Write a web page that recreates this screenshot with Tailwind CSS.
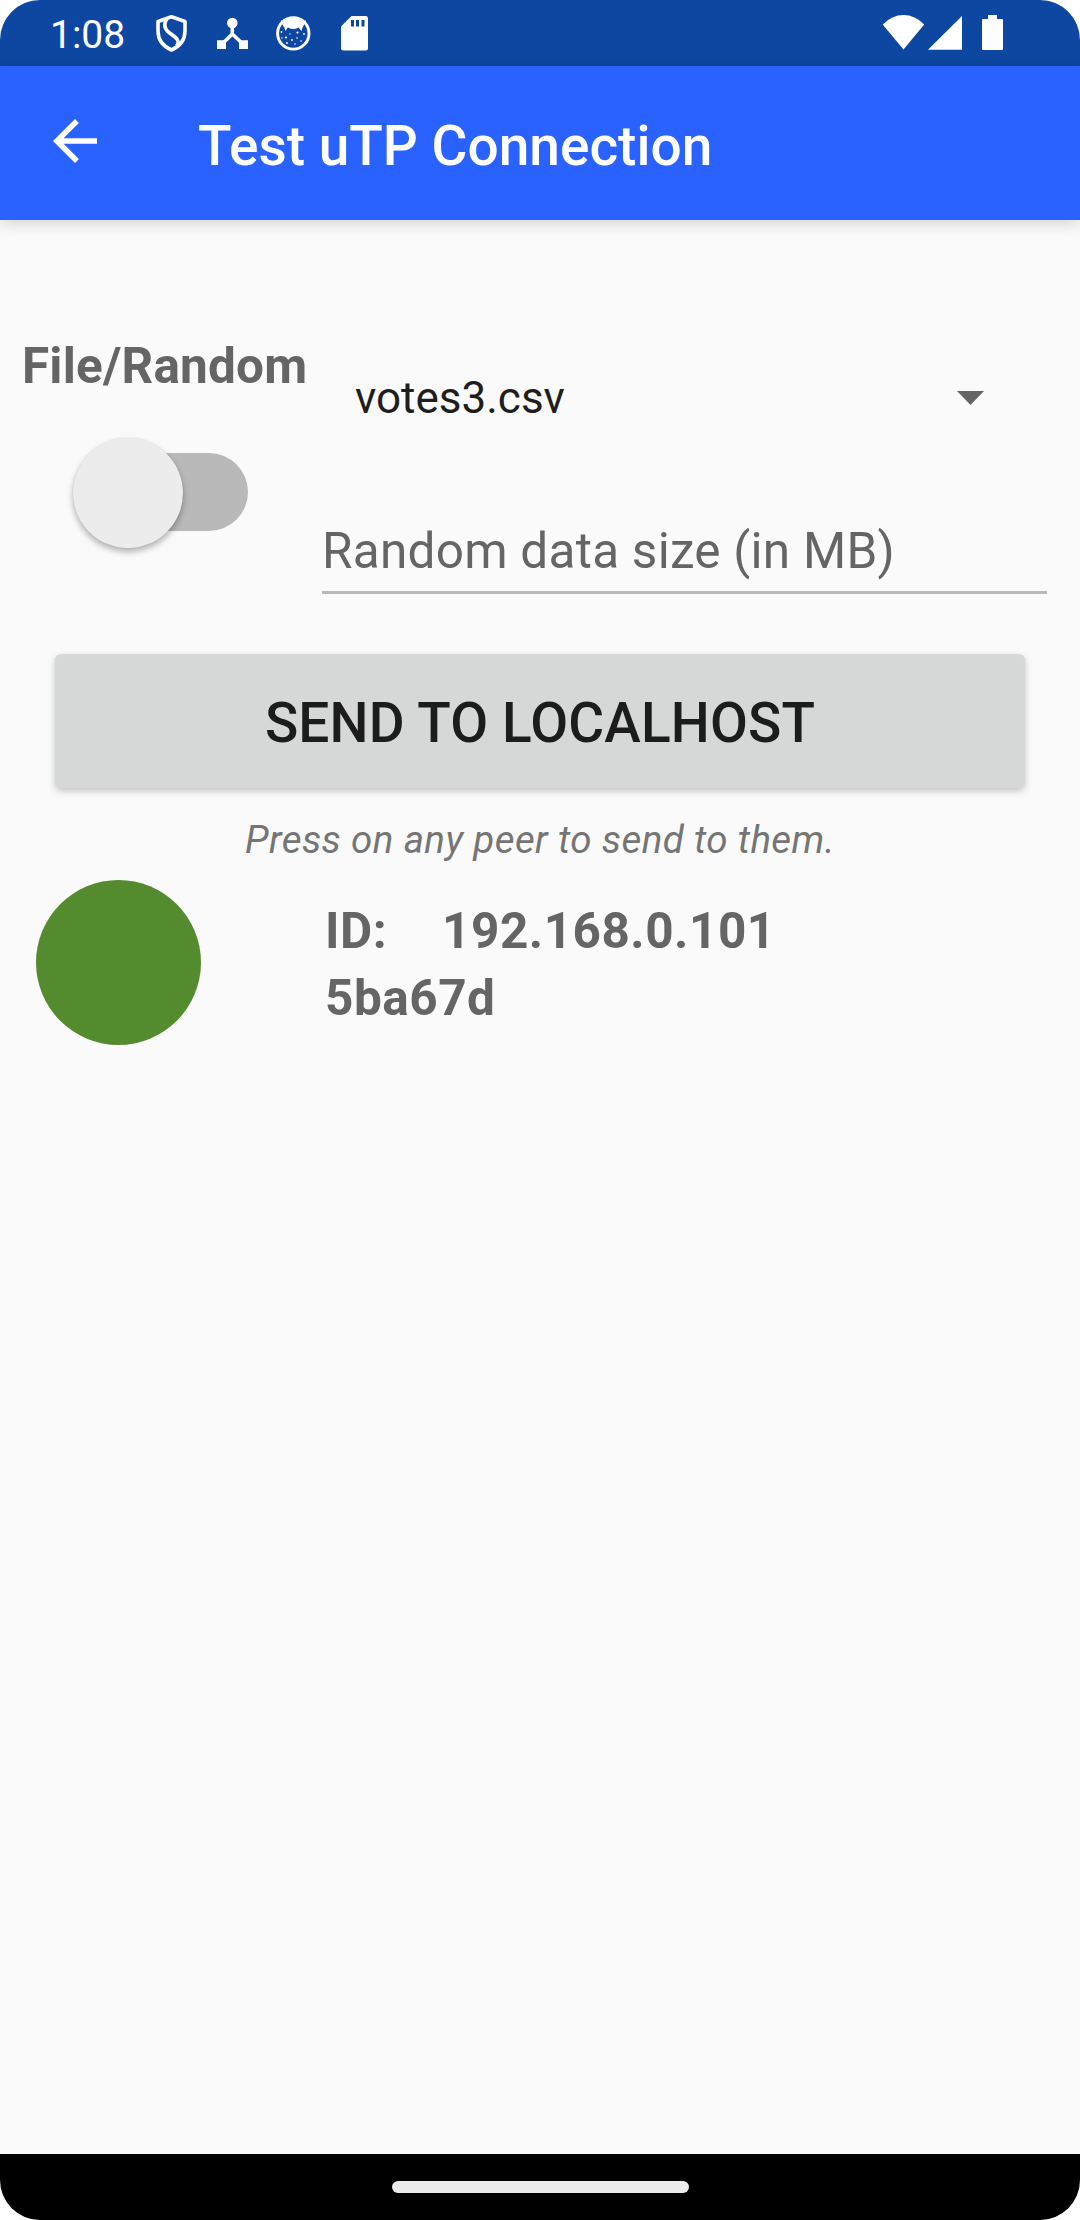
<!DOCTYPE html>
<html lang="en">
<head>
<meta charset="utf-8">
<title>Test uTP Connection</title>
<script src="https://cdn.jsdelivr.net/npm/@tailwindcss/browser@4"></script>
</head>
<body class="bg-white font-['Roboto',sans-serif]">
<div class="flex h-[2220px] w-[1080px] flex-col overflow-hidden rounded-[40px] bg-[#fafafa]">
  <!-- Status bar -->
  <div class="flex h-[66px] shrink-0 bg-[#0d47a1] text-white">
    <span class="w-[104px] shrink-0 pt-[4px] pl-[50px] text-[39px] leading-[63px] whitespace-nowrap">1:08</span>
    <svg class="h-[66px] w-[976px]" viewBox="104 0 976 66" fill="#fff">
      <path d="M171.500 16.800L185 21.500V31Q185 44 171.500 50Q158 44 158 31V21.500Z" fill="none" stroke="#fff" stroke-width="3.600" stroke-linejoin="round"/>
      <path d="M167 18.500C163.500 24 164.500 29 169 32.500L175 37Q180.500 41.500 176.500 46" fill="none" stroke="#fff" stroke-width="3.600"/>
      <circle cx="232.300" cy="23" r="5.300"/>
      <path d="M232.300 25V34L221 45M232.300 34L244 45" fill="none" stroke="#fff" stroke-width="3.600"/>
      <path d="M217 40.300h9V49H217zM239 40.300h9V49h-9z"/>
      <circle cx="293.300" cy="33.400" r="15.700" fill="none" stroke="#fff" stroke-width="2.900"/>
      <path d="M283 20Q293 14 304 20L302.500 27.500L301.500 31L298.500 27.500Q293.300 30.500 288 27.500L285.200 31L284.500 27.500Z"/>
      <path d="M281.500 20.500L284.500 27M305.500 20.500L302 27" fill="none" stroke="#fff" stroke-width="1.500"/>
      <g><circle cx="281.500" cy="32" r=".9"/><circle cx="286" cy="37.500" r="1.100"/><circle cx="290" cy="34" r=".7"/><circle cx="292" cy="40" r=".9"/><circle cx="297.500" cy="32.500" r="1.100"/><circle cx="297" cy="38" r=".8"/><circle cx="301" cy="41" r=".8"/><circle cx="304" cy="34" r=".9"/><circle cx="287" cy="43" r=".9"/><circle cx="295" cy="44" r=".8"/><circle cx="282" cy="38" r=".7"/></g>
      <path fill-rule="evenodd" d="M351.500 16H365.500Q368 16 368 18.500V48Q368 50.500 365.500 50.500H343.500Q341 50.500 341 48V26.500ZM351 20V26.500H354V20ZM356 20V26.500H359V20ZM361.500 20V26.500H364.500V20Z"/>
      <path d="M903.500 49.500L882.700 24.500Q892 15 903.500 15T924.200 24.500Z"/>
      <path d="M962 16V49.700H928Z"/>
      <path d="M988 15h9v4h5q1 0 1 1v29q0 1-1 1h-19q-1 0-1-1V20q0-1 1-1h5z"/>
    </svg>
  </div>
  <!-- App bar -->
  <header class="z-10 flex h-[154px] shrink-0 bg-[#2962ff] pl-[42px] text-white shadow-[0_3px_14px_rgba(0,0,0,0.16)]">
    <svg class="mt-[42px] size-[66px]" viewBox="0 0 24 24" fill="#fff"><path d="M20 11H7.830l5.590-5.590L12 4l-8 8 8 8 1.410-1.410L7.830 13H20v-2z"/></svg>
    <h1 class="pt-[6px] pl-[90px] text-[55px] leading-[148px] font-medium whitespace-nowrap">Test uTP Connection</h1>
  </header>
  <!-- Source selection -->
  <section class="flex h-[434px] shrink-0">
    <div class="w-[322px] shrink-0 pt-[116px]">
      <div class="pl-[22px] text-[49.5px] leading-[60px] font-bold tracking-[0.2px] whitespace-nowrap text-[#656565]">File/Random</div>
      <div class="mt-[57px] ml-[88px] flex h-[78px] w-[160px] items-center rounded-full bg-[#b9b9b9]">
        <div class="mt-[2px] -ml-[15px] size-[110px] shrink-0 rounded-full bg-[#ececec] shadow-[0_4px_6px_rgba(0,0,0,0.28),0_0_2px_rgba(0,0,0,0.1)]"></div>
      </div>
    </div>
    <div class="w-[725px] pt-[147px]">
      <div class="flex h-[63px] items-center justify-between pr-[63.500px] pl-[33px]">
        <span class="text-[44px] leading-[63px] text-[#1e1e1e]">votes3.csv</span>
        <svg class="-mt-[2px] h-[14px] w-[27px]" viewBox="0 0 27 14" fill="#656565"><path d="M0 0H27L13.500 14Z"/></svg>
      </div>
      <div class="mt-[91px] h-[73px] border-b-[3px] border-[#b9b9b9] text-[49.500px] leading-[60px] tracking-[0.25px] whitespace-nowrap text-[#656565]">Random data size (in MB)</div>
    </div>
  </section>
  <button class="mx-[55px] h-[134px] shrink-0 rounded-[6px] bg-[#d6d8d7] pt-[5px] text-[55px] leading-[129px] font-medium tracking-[0.15px] text-[#1c1c1c] shadow-[0_3px_7px_rgba(0,0,0,0.22)]">SEND TO LOCALHOST</button>
  <p class="mt-[22px] h-[60px] shrink-0 text-center text-[38.5px] leading-[60px] tracking-[0.4px] text-[#757575] italic">Press on any peer to send to them.</p>
  <!-- Peer -->
  <div class="mt-[10px] flex h-[165px] shrink-0 pl-[36px]">
    <div class="size-[165px] rounded-full bg-[#558b2f]"></div>
    <div class="pt-[17.500px] pl-[124px] text-[49.500px] leading-[67px] font-bold tracking-[0.5px] text-[#656565]">
      <div class="flex gap-[55px]"><span>ID:</span><span>192.168.0.101</span></div>
      <div>5ba67d</div>
    </div>
  </div>
  <!-- Navigation bar -->
  <div class="mt-auto flex h-[66px] shrink-0 items-center justify-center bg-black">
    <div class="h-[12px] w-[297px] rounded-full bg-[#ececec]"></div>
  </div>
</div>
</body>
</html>
